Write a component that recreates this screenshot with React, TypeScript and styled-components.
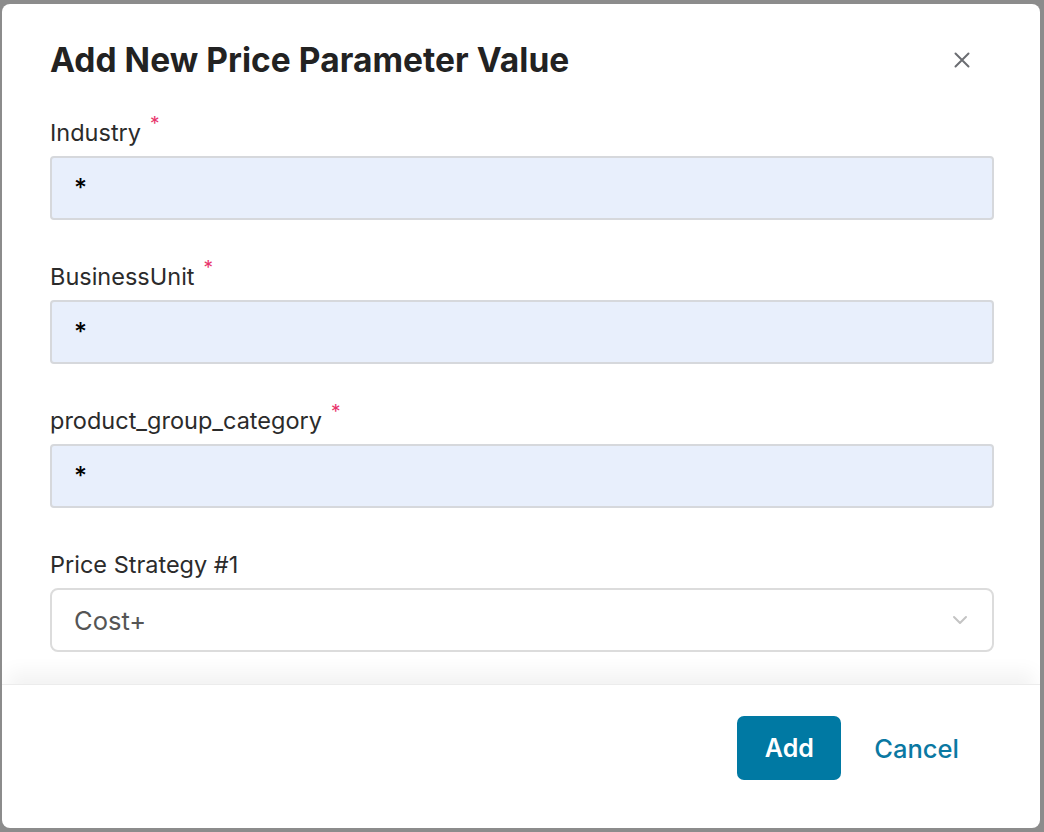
import React from "react";
import styled, { createGlobalStyle } from "styled-components";

const GlobalStyle = createGlobalStyle`
  html, body {
    margin: 0;
    padding: 0;
    background: #8c8c8c;
    font-family: Inter, "Noto Sans", sans-serif;
  }
  * { box-sizing: border-box; }
`;

const Backdrop = styled.div`
  width: 1044px;
  height: 832px;
  padding: 4px 4px 4px 2px;
  background: #8c8c8c;
`;

const Modal = styled.div`
  width: 100%;
  height: 100%;
  background: #fff;
  border-radius: 8px;
  display: flex;
  flex-direction: column;
  overflow: hidden;
`;

const Header = styled.div`
  display: flex;
  align-items: flex-start;
  justify-content: space-between;
  padding: 36px 70px 0 48px;
  height: 115px;
`;

const Title = styled.h2`
  margin: 0;
  font-size: 33.5px;
  font-weight: 700;
  color: #222;
  letter-spacing: 0.05px;
  line-height: 40px;
`;

const CloseButton = styled.button`
  border: none;
  background: none;
  padding: 0;
  margin-top: 12px;
  width: 16px;
  height: 16px;
  color: #6b6d72;
  display: flex;
`;

const Body = styled.div`
  flex: 1;
  padding: 0 46px 0 48px;
  display: flex;
  flex-direction: column;
  gap: 43px;
`;

const Field = styled.div`
  display: flex;
  flex-direction: column;
  gap: 9px;
`;

const Label = styled.label`
  font-size: 23.5px;
  color: #2b2b2b;
  line-height: 28px;
  height: 28px;
`;

const Req = styled.sup`
  color: #e8336b;
  font-size: 19px;
  margin-left: 9px;
  line-height: 0;
  position: relative;
  top: -2px;
`;

const Input = styled.div<{ $filled?: boolean }>`
  height: 64px;
  border: 2px solid ${(p) => (p.$filled ? "#d6d8dc" : "#dcdcdc")};
  background: ${(p) => (p.$filled ? "#e8effc" : "#fff")};
  border-radius: ${(p) => (p.$filled ? "4px" : "8px")};
  display: flex;
  align-items: center;
  justify-content: space-between;
  padding: 0 24px 0 22px;
  font-size: ${(p) => (p.$filled ? "25px" : "25.5px")};
  font-weight: ${(p) => (p.$filled ? 500 : 400)};
  color: ${(p) => (p.$filled ? "#000" : "#555")};
`;

const Footer = styled.div`
  height: 144px;
  border-top: 1px solid #ececec;
  box-shadow: 0 -18px 18px -6px rgba(0, 0, 0, 0.05);
  display: flex;
  align-items: flex-start;
  justify-content: flex-end;
  gap: 33px;
  padding: 31px 81px 0 0;
`;

const PrimaryButton = styled.button`
  width: 104px;
  height: 64px;
  border: none;
  border-radius: 7px;
  background: #0079a3;
  color: #fff;
  font-family: Inter, sans-serif;
  font-size: 25px;
  font-weight: 600;
`;

const LinkButton = styled.button`
  border: none;
  background: none;
  padding: 0;
  height: 64px;
  color: #0a78a2;
  font-family: Inter, sans-serif;
  font-size: 25.5px;
  font-weight: 500;
`;

const fields = ["Industry", "BusinessUnit", "product_group_category"];

export default function App() {
  return (
    <>
      <GlobalStyle />
      <Backdrop>
        <Modal>
          <Header>
            <Title>Add New Price Parameter Value</Title>
            <CloseButton aria-label="Close">
              <svg width="16" height="16" viewBox="0 0 16 16">
                <path d="M1.5 1.5L14.5 14.5M14.5 1.5L1.5 14.5" stroke="currentColor" strokeWidth="2" strokeLinecap="round" />
              </svg>
            </CloseButton>
          </Header>
          <Body>
            {fields.map((f) => (
              <Field key={f}>
                <Label>
                  {f}
                  <Req>*</Req>
                </Label>
                <Input $filled>*</Input>
              </Field>
            ))}
            <Field>
              <Label>Price Strategy #1</Label>
              <Input>
                Cost+
                <svg width="16" height="10" viewBox="0 0 16 10">
                  <path d="M2 2L8 8L14 2" stroke="#c4c4c4" strokeWidth="2" fill="none" strokeLinecap="round" strokeLinejoin="round" />
                </svg>
              </Input>
            </Field>
          </Body>
          <Footer>
            <PrimaryButton>Add</PrimaryButton>
            <LinkButton>Cancel</LinkButton>
          </Footer>
        </Modal>
      </Backdrop>
    </>
  );
}
